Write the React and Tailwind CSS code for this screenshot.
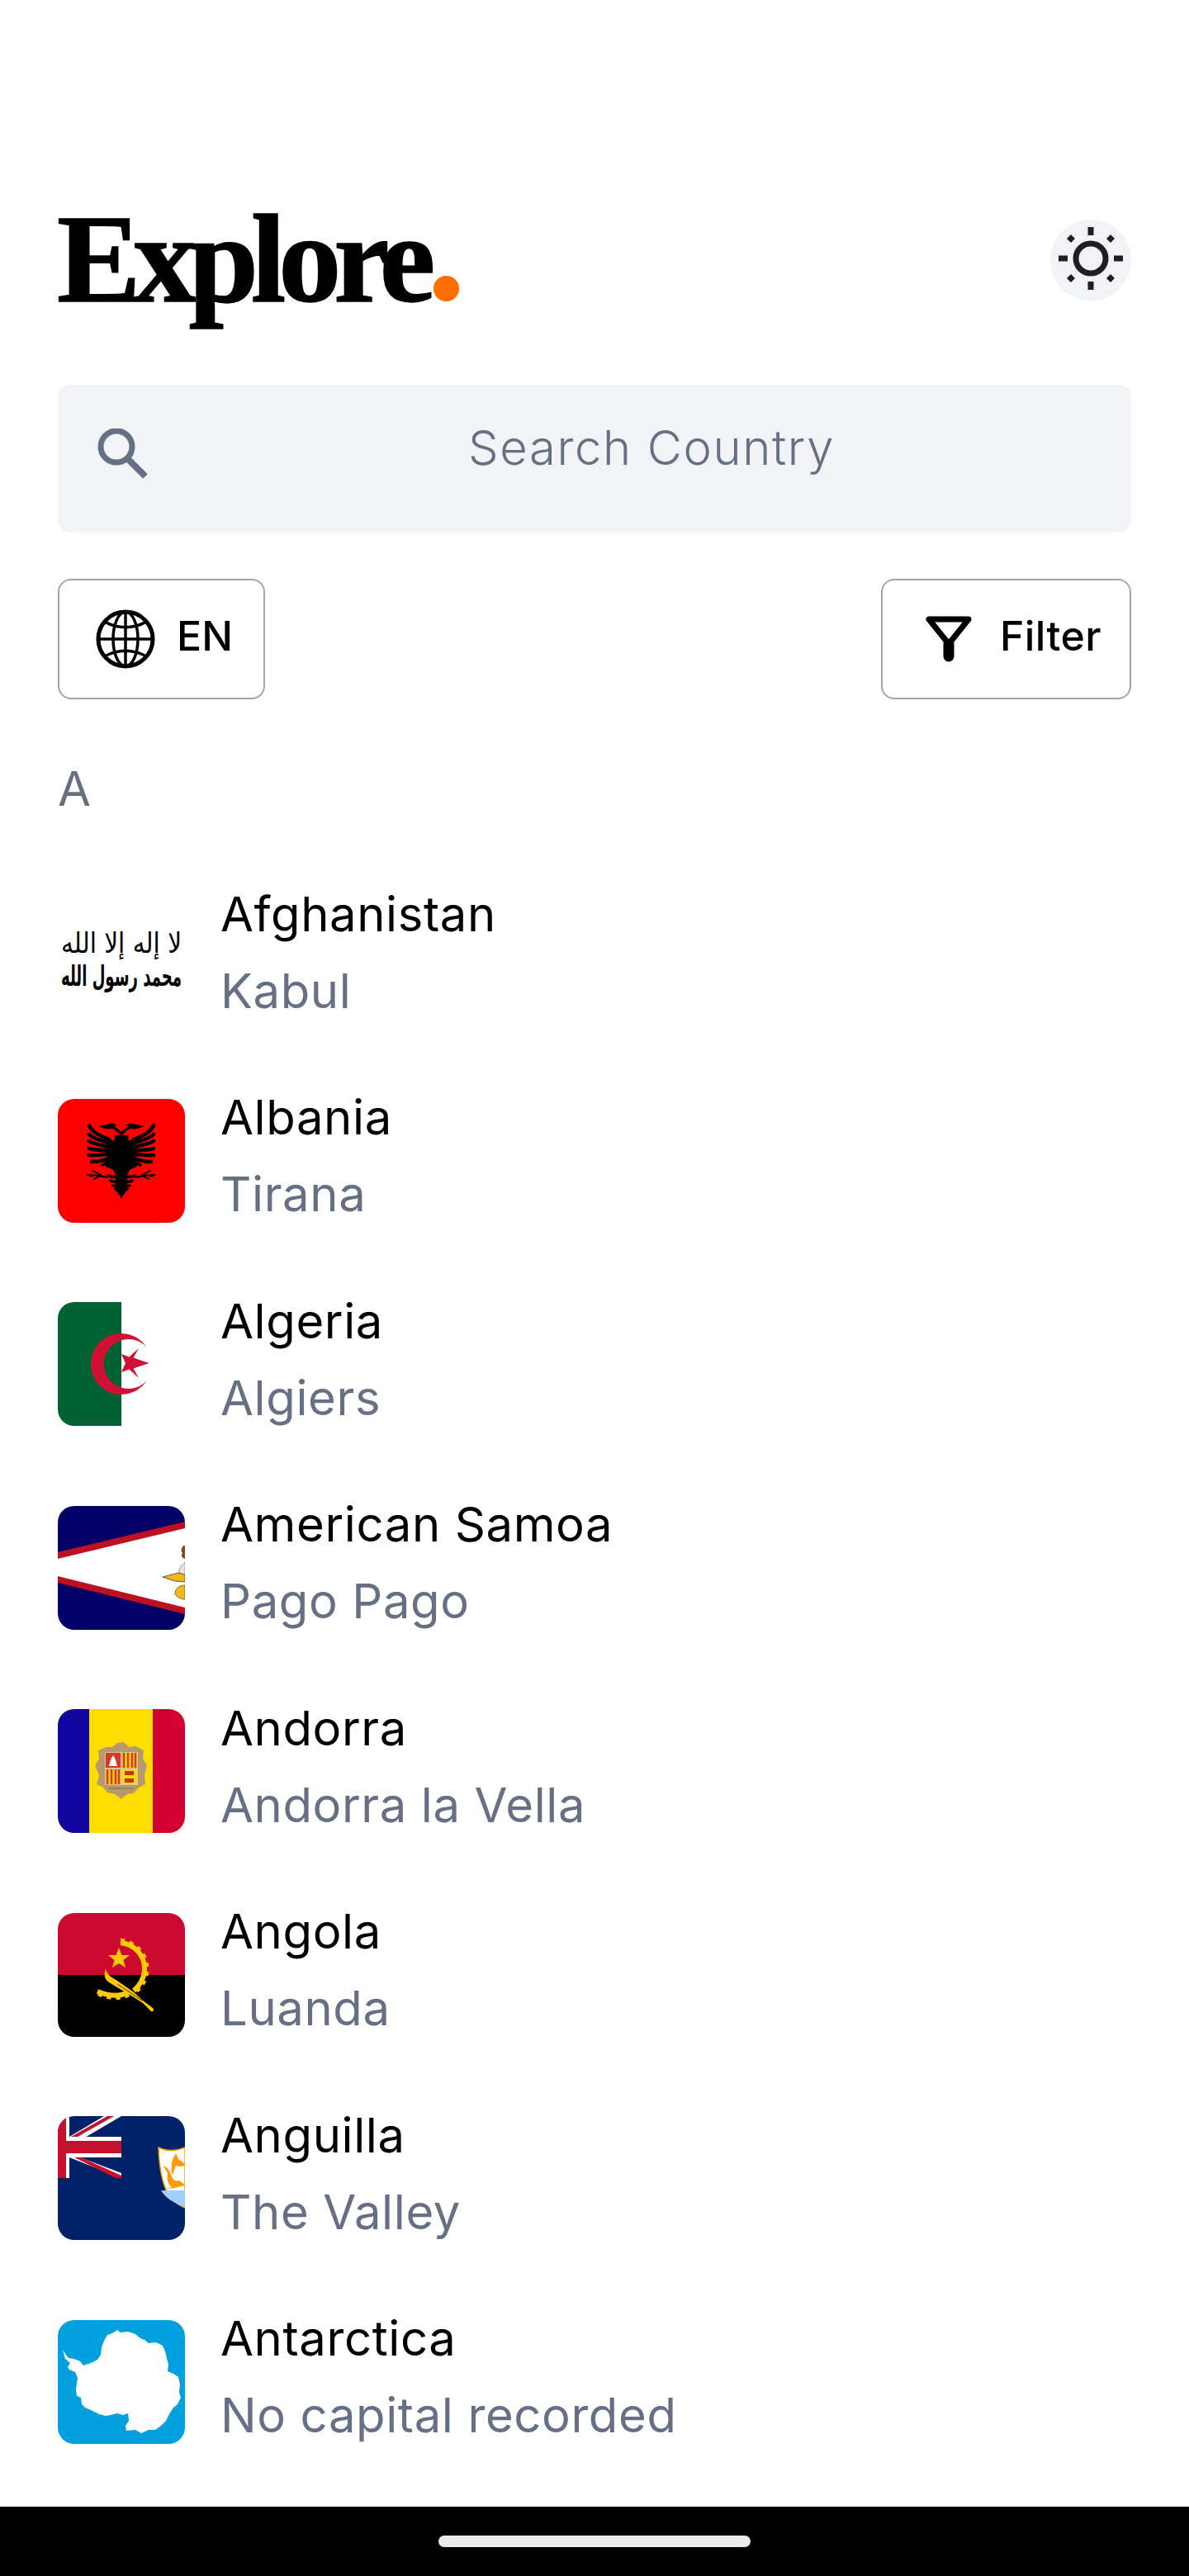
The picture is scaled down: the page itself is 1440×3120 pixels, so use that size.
import React from 'react';

const SANS = 'font-["Inter","Noto_Sans",sans-serif]';

function SunIcon() {
    return (
        <svg width="98" height="98" viewBox="0 0 98 98" fill="#1f1f1f">
            <circle cx="49" cy="47" r="18" fill="none" stroke="#1f1f1f" strokeWidth="7" />
            <rect x="45.5" y="9" width="7" height="10" />
            <rect x="45.5" y="75" width="7" height="10" />
            <rect x="10" y="43.5" width="11" height="7" />
            <rect x="77" y="43.5" width="11" height="7" />
            <path d="M25 18l5 5-5 5-5-5zM73 18l5 5-5 5-5-5zM25 66l5 5-5 5-5-5zM73 66l5 5-5 5-5-5z" />
        </svg>
    );
}

function SearchIcon() {
    return (
        <svg width="62" height="61" viewBox="0 0 62 61" fill="none" stroke="#667085">
            <ellipse cx="23" cy="22" rx="19" ry="19" strokeWidth="7" />
            <path d="M38 38L58 58" strokeWidth="8" />
        </svg>
    );
}

function GlobeIcon() {
    return (
        <svg width="72" height="72" viewBox="0 0 72 72" fill="none" stroke="#000" strokeWidth="3.5">
            <circle cx="36" cy="36" r="33" strokeWidth="5" />
            <ellipse cx="36" cy="36" rx="15" ry="33" />
            <path d="M36 3V69M3 36H69" />
            <path d="M11 15C26 24 46 24 61 15M11 57C26 48 46 48 61 57" />
        </svg>
    );
}

function FilterIcon() {
    return (
        <svg width="56" height="56" viewBox="0 0 56 56" fill="none" stroke="#000" strokeLinejoin="round" strokeLinecap="round">
            <path d="M4 4H52L28 34Z" strokeWidth="7" />
            <path d="M28 34V49" strokeWidth="13" />
        </svg>
    );
}

function AfghanistanFlag() {
    return (
        <svg viewBox="0 0 154 150" className="w-full h-full">
            <rect width="154" height="150" fill="#fff" />
            <text transform="translate(77,70) scale(1,1.9)" textAnchor="middle" textLength="146" lengthAdjust="spacingAndGlyphs" fontFamily="DejaVu Sans" fontSize="18" fill="#000">
                لا إله إلا الله
            </text>
            <text transform="translate(77,110) scale(1,2)" textAnchor="middle" textLength="146" lengthAdjust="spacingAndGlyphs" fontFamily="DejaVu Sans" fontWeight="700" fontSize="17" fill="#000">
                محمد رسول الله
            </text>
        </svg>
    );
}

// left half of the eagle, mirrored for the right one
function EagleHalf() {
    return (
        <g>
            <g fill="none" stroke="#000" strokeWidth="4.5" strokeLinecap="round">
                <path d="M38 32C42 41 52 45 64 50" />
                <path d="M38 43C44 49 54 50 64 55" />
                <path d="M38 51C44 55 54 56 64 59" />
                <path d="M38 60C45 62 54 62 64 63" />
                <path d="M38 68C46 69 56 67 64 67" />
                <path d="M41 76C48 77 58 73 66 71" />
                <path d="M54 80C58 78 62 76 65 73" strokeWidth="3.500" />
                <path d="M62 82C64 80 66 78 68 75" strokeWidth="3.500" />
            </g>
            <path d="M78 44L66 44L60 48L60 76L66 84L70 92L78 92Z" fill="#000" />
            <path d="M78 46C73 41 71 38 66 36C60 37 55 36 50 33L59 31L66 29L72 32L68 33C72 35 75 38 78 41Z" fill="#000" />
            <path d="M62 39C61 44 63 49 68 51C70 46 68 42 65 39Z" fill="#ff0000" />
            <g fill="none" stroke="#000" strokeLinecap="round">
                <path d="M72 86C68 83 64 82 60 80" strokeWidth="5" />
                <path d="M36 92C44 92 52 93 60 95" strokeWidth="2.200" />
                <path d="M42 87L52 92M44 97L52 93M36 92L42 94" strokeWidth="1.800" />
                <path d="M76 90C72 95 66 95 61 93" strokeWidth="3.500" />
                <path d="M76 97C72 101 68 101 64 99" strokeWidth="3.500" />
                <path d="M76 103C73 106 70 106 67 105" strokeWidth="3.500" />
                <path d="M76 108C74 110 72 110 70 109" strokeWidth="3.500" />
            </g>
            <path d="M78 90L70 90L70 110L77 120L78 120Z" fill="#000" />
        </g>
    );
}

function AlbaniaFlag() {
    return (
        <svg viewBox="0 0 154 150" className="w-full h-full">
            <rect width="154" height="150" fill="#ff0000" />
            <EagleHalf />
            <g transform="matrix(-1 0 0 1 154 0)">
                <EagleHalf />
            </g>
        </svg>
    );
}

function AlgeriaFlag() {
    return (
        <svg viewBox="0 0 154 150" className="w-full h-full">
            <rect width="154" height="150" fill="#fff" />
            <rect width="77" height="150" fill="#006233" />
            <path d="M108 55A37 37 0 1 0 108 95A30 30 0 1 1 108 55Z" fill="#d21034" />
            <path d="M110.5 74L91.5 80.5L98 92L86.5 81.5L77 85L82 74L77 63L86.5 66.5L98 56L91.5 67.5Z" fill="#d21034" />
        </svg>
    );
}

function AmericanSamoaFlag() {
    return (
        <svg viewBox="0 0 154 150" className="w-full h-full">
            <rect width="154" height="150" fill="#000066" />
            <path d="M0 60L154 23V127L0 89Z" fill="#fff" />
            <path d="M0 56L154 19V27L0 64ZM0 85L154 123V131L0 93Z" fill="#bd1021" />
            <path d="M152 48C149 52 149 55 151 57C149 60 150 63 154 64V48Z" fill="#7a4a24" />
            <path d="M154 68C149 72 146 76 147 82L154 85Z" fill="#e8e4da" stroke="#8a8a80" strokeWidth="0.8" />
            <path d="M127 86L146 81L154 83V92L142 91Z" fill="#f2b71f" stroke="#4a3a10" strokeWidth="0.8" />
            <path d="M154 96C146 96 142 101 142 106C143 110 149 113 154 113Z" fill="#f2b71f" stroke="#6b5313" strokeWidth="0.8" />
        </svg>
    );
}

function AndorraFlag() {
    return (
        <svg viewBox="0 0 154 150" className="w-full h-full">
            <rect width="154" height="150" fill="#fedd00" />
            <rect width="38" height="150" fill="#10069f" />
            <rect x="115" width="39" height="150" fill="#d50032" />
            <path d="M66 46L72 41L80 40L86 46L94 45L104 50L103 60L108 68L105 80L106 91L98 95L92 102L84 103L77 109L69 103L60 101L54 94L47 91L50 80L45 68L50 60L49 50L59 46Z" fill="#b79a6b" />
            <rect x="57" y="52" width="40" height="40" fill="#d8c49a" />
            <rect x="58" y="53" width="18" height="18" fill="#d6392c" />
            <path d="M67 56C64 60 63 64 63 67H71C71 64 70 60 67 56Z" fill="#fff" />
            <rect x="62" y="67" width="10" height="2" fill="#fff" />
            <rect x="78" y="53" width="18" height="18" fill="#fedd00" />
            <path d="M80 53V71M85 53V71M90 53V71M94 53V71" stroke="#d6392c" strokeWidth="2.6" />
            <rect x="58" y="73" width="18" height="18" fill="#fedd00" />
            <path d="M60 73V91M65 73V91M70 73V91M74 73V91" stroke="#d6392c" strokeWidth="2.6" />
            <rect x="78" y="73" width="18" height="18" fill="#fedd00" />
            <rect x="81" y="75" width="11" height="5" fill="#c9301f" />
            <rect x="81" y="84" width="11" height="5" fill="#c9301f" />
            <path d="M62 96H92" stroke="#8d744a" strokeWidth="2" strokeDasharray="2 1" />
        </svg>
    );
}

function AngolaFlag() {
    return (
        <svg viewBox="0 0 154 150" className="w-full h-full">
            <rect width="154" height="75" fill="#cc092f" />
            <rect y="75" width="154" height="75" fill="#000" />
            <g fill="none" stroke="#ffcb00">
                <path d="M76 36C94 38 106 52 105 70C104 80 99 88 92 94M86 96C74 102 60 100 48 95" strokeWidth="6" />
                <path d="M76 33C94 35 109 50 108 70C107 81 101 91 93 96M86 99C74 105 60 103 47 97" strokeWidth="5" strokeDasharray="5 6" />
            </g>
            <path d="M74 42L77.500 51L87 51L79.500 57L82 66L74 61L66 66L68.500 57L61 51L70.500 51Z" fill="#ffcb00" />
            <path d="M58 68C55 75 57 80 62 84L92 102L103 109L113 119C116 120 117 117 115 115L103 106L92 96L72 82C65 78 60 75 58 68Z" fill="#ffcb00" />
            <path d="M72 86L102 106" stroke="#000" strokeWidth="0.8" />
        </svg>
    );
}

function AnguillaFlag() {
    return (
        <svg viewBox="0 0 154 150" className="w-full h-full">
            <rect width="154" height="150" fill="#012169" />
            <path d="M14 25L56 0H77L14 37ZM14 50L77 75V69L27 50ZM14 25" fill="#fff" />
            <path d="M16 25L60 0H68L24 25ZM28 50L77 72V75H70L20 50Z" fill="#c8102e" />
            <path d="M14 0H10V25H0V50H10V75H14V50H77V25H14Z" fill="#fff" />
            <rect y="30" width="77" height="15" fill="#c8102e" />
            <rect width="10" height="75" fill="#c8102e" />
            <path d="M122 38C132 43 144 42 154 38V111C138 105 124 92 122 38Z" fill="#fff" stroke="#e8a400" strokeWidth="1.500" />
            <path d="M125 90H154V110C142 106 131 100 125 90Z" fill="#a0cfff" />
            <g fill="#ff9a00">
                <path d="M143 45C140 50 137 56 138 62C137 66 138 69 139 71L143 60C148 61 152 62 154 58L149 54L146 52Z" />
                <path d="M133 63L128 60C129 64 132 67 133 69C132 76 133 82 138 86L130 88L142 87C147 85 152 85 154 83L147 78C142 80 138 76 137 70Z" />
            </g>
        </svg>
    );
}

function AntarcticaFlag() {
    return (
        <svg viewBox="0 0 154 150" className="w-full h-full">
            <rect width="154" height="150" fill="#00a1de" />
            <path d="M6 36L9 41L13 46L20 47L27 50L31 55L40 52L48 48L52 42L53 33L56 25L60 18L66 16L72 12L76 15L85 14L94 17L100 22L105 24L110 28L119 27L127 31L130 38L132 46L134 54L133 62L140 65L146 69L148 78L147 88L149 94L145 102L140 106L135 114L131 122L125 128L118 133L110 133L101 137L94 133L83 134L82 128L86 122L85 113L79 115L72 113L64 115L58 116L50 114L42 110L33 106L29 102L28 94L23 92L22 84L23 76L24 70L21 63L14 60L12 57L15 52L9 47Z" fill="#fff" />
        </svg>
    );
}

const countries = [
    { name: 'Afghanistan', capital: 'Kabul', Flag: AfghanistanFlag },
    { name: 'Albania', capital: 'Tirana', Flag: AlbaniaFlag },
    { name: 'Algeria', capital: 'Algiers', Flag: AlgeriaFlag },
    { name: 'American Samoa', capital: 'Pago Pago', Flag: AmericanSamoaFlag },
    { name: 'Andorra', capital: 'Andorra la Vella', Flag: AndorraFlag },
    { name: 'Angola', capital: 'Luanda', Flag: AngolaFlag },
    { name: 'Anguilla', capital: 'The Valley', Flag: AnguillaFlag },
    { name: 'Antarctica', capital: 'No capital recorded', Flag: AntarcticaFlag },
];

const CountryRow = ({ name, capital, Flag }) => (
    <div className="flex h-[150px] items-center gap-[43px]">
        <div className="h-[150px] w-[154px] shrink-0 overflow-hidden rounded-[20px]">
            <Flag />
        </div>
        <div className="flex flex-col gap-[23px] pb-[12px] tracking-[0.6px]">
            <div className="text-[58px] leading-[70px] text-black">{name}</div>
            <div className="text-[58px] leading-[70px] text-[#667085]">{capital}</div>
        </div>
    </div>
);

export default function App() {
    return (
        <div className={`flex h-[3120px] w-[1440px] flex-col overflow-hidden bg-white ${SANS}`}>
            <div className="flex-1 px-[70px] pt-[266px]">
                {/* Header */}
                <div className="flex h-[98px] items-center justify-between">
                    <div className='-ml-[1px] flex items-baseline font-["Liberation_Serif",serif] text-[152px] font-bold leading-[98px] tracking-[-9px] text-black [-webkit-text-stroke:1.5px_#000]'>
                        Explore
                        <span className="ml-[7px] inline-block h-[31px] w-[31px] rounded-full bg-[#ff6f00]" />
                    </div>
                    <div className="flex h-[98px] w-[98px] items-center justify-center rounded-full bg-[#f2f3f7]">
                        <SunIcon />
                    </div>
                </div>

                {/* Search */}
                <div className="mt-[102px] flex h-[179px] items-center rounded-[16px] bg-[#f2f3f7] pl-[48px]">
                    <div className="mb-[12px]">
                        <SearchIcon />
                    </div>
                    <span className="ml-[387px] pb-[26px] text-[58px] font-light tracking-[1.6px] text-[#667085]">Search Country</span>
                </div>

                {/* Language + filter */}
                <div className="mt-[56px] flex justify-between">
                    <div className="flex h-[146px] w-[251px] items-center gap-[26px] rounded-[16px] border-2 border-[#a0a5b5] pl-[44px]">
                        <GlobeIcon />
                        <span className="pb-[8px] text-[50px] font-medium text-black">EN</span>
                    </div>
                    <div className="flex h-[146px] w-[303px] items-center gap-[34px] rounded-[16px] border-2 border-[#a0a5b5] pl-[52px]">
                        <FilterIcon />
                        <span className="pb-[8px] text-[50px] font-medium tracking-[0.4px] text-black">Filter</span>
                    </div>
                </div>

                <div className="mt-[76px] text-[58px] leading-[64px] text-[#667085]">A</div>

                {/* Country list */}
                <div className="mt-[97px] flex flex-col gap-[96.5px]">
                    {countries.map((c) => (
                        <CountryRow key={c.name} {...c} />
                    ))}
                </div>
            </div>

            {/* Android nav bar */}
            <div className="flex h-[84px] items-center justify-center bg-black">
                <div className="h-[14px] w-[378px] rounded-full bg-[#ebebeb]" />
            </div>
        </div>
    );
}
